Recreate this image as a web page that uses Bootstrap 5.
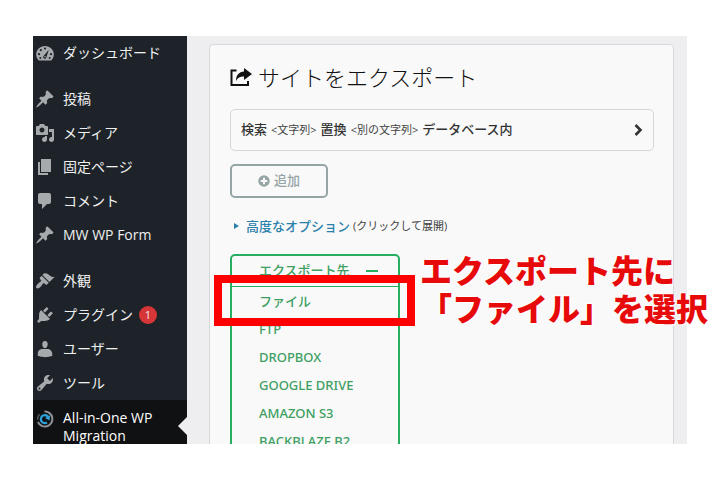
<!DOCTYPE html>
<html lang="ja">
<head>
<meta charset="utf-8">
<meta name="viewport" content="width=device-width, initial-scale=1">
<title>サイトをエクスポート</title>
<link href="https://cdn.jsdelivr.net/npm/bootstrap@5.3.0/dist/css/bootstrap.min.css" rel="stylesheet">
<style>
  body { font-family: "Open Sans", "Noto Sans CJK JP", sans-serif; background: #fff; font-size: 13px; }
  .stage { padding: 36px 33px; height: 100vh; }
  .admin { background: #eeeef0; }
  .side { width: 154px; background: #1d2328; font-size: 14px; }
  .side .nav-link { color: #f0f0f1; min-height: 34px; padding: 0 4px 0 2px; gap: 8px; line-height: 18px; }
  .side .nav-link svg { width: 20px; height: 20px; fill: #a7aaad; flex: none; }
  .side .group { margin-bottom: 12px; }
  .side .nav-link.current { background: #101112; color: #fff; padding-top: 9px; padding-bottom: 9px; }
  .current::after { content: ""; position: absolute; right: 0; top: 17px; border: 9px solid transparent; border-right-color: #eeeef0; border-left: 0; }
  .count { background: #d63638; width: 18px; height: 18px; font-size: 11px; line-height: 18px; margin-left: -2px; }
  .main { padding: 8px 13px 0 22px; }
  .panel { background: #f9f9f9; border: 1px solid #d8d8da; border-radius: 4px 4px 0 0; padding: 16px 19px 0 20px; min-height: 100%; }
  .panel h1 { font-size: 22px; line-height: 32px; font-weight: 300; color: #111; gap: 6px; margin-bottom: 16px; }
  .replace { background: #f9f9f9; border: 1px solid #d6d6d6; border-radius: 5px; height: 42px; padding: 0 10px; color: #333; }
  .replace b { font-weight: 500; }
  .replace small { font-size: 11px; color: #444; }
  .btn-add { width: 98px; height: 34px; border: 2px solid #95a5a6; border-radius: 5px; color: #95a5a6; font-size: 13px; font-weight: 500; margin-top: 13px; padding: 0; gap: 4px; }
  .advanced { margin-top: 16px; line-height: 24px; color: #2980a9; font-weight: 500; gap: 3px; padding-left: 4px; }
  .advanced svg { margin-right: 4px; }
  .advanced small { font-size: 11px; font-weight: 400; color: #444; }
  .export { font-family: "Noto Sans", "Noto Sans CJK JP", sans-serif; width: 170px; margin-top: 16px; border: 2px solid #27ae60; border-radius: 5px; color: #3d9f62; font-weight: 500; }
  .export button { color: inherit; font-weight: 500; background: none; border: 0; border-bottom: 1px solid #27ae60; height: 31px; padding: 0 20px 0 27px; }
  .export a { color: inherit; line-height: 28px; padding-left: 27px; }
  .ring { position: absolute; left: 214px; top: 275px; width: 201px; height: 51px; border: 8px solid #f00; pointer-events: none; }
  .callout-text { position: absolute; left: 420px; top: 250px; font-size: 32px; line-height: 38px; font-weight: 900; color: #e60a0a; text-shadow: 0 0 1px #fff, 1px 1px 1px #fff, -1px -1px 1px #fff; font-family: "Noto Sans CJK JP", sans-serif; }
</style>
<script src="https://cdn.jsdelivr.net/npm/bootstrap@5.3.0/dist/js/bootstrap.bundle.min.js"></script>
</head>
<body>
<div class="stage position-relative overflow-hidden">
  <div class="admin d-flex h-100 overflow-hidden">
    <nav class="side flex-shrink-0" aria-label="管理メニュー">
      <div class="group nav flex-column">
        <a class="nav-link d-flex align-items-center" href="#"><svg viewBox="0 0 20 20"><path d="M3.800 17.500h12.400c1.600-1.600 2.600-3.800 2.600-6C18.800 6.600 14.900 3 10 3s-8.800 3.600-8.800 8.500c0 2.200 1 4.400 2.600 6z"/><g fill="#1d2328"><circle cx="10" cy="5.500" r="1.100"/><circle cx="5.800" cy="7.200" r="1.100"/><circle cx="4" cy="11.200" r="1.100"/><circle cx="16" cy="11.200" r="1.100"/><circle cx="5.300" cy="15" r="1"/><circle cx="14.700" cy="15" r="1"/><path d="M13.800 6.800 11.500 14a1.700 1.700 0 1 1-2.700-1.300z"/></g><circle cx="10" cy="13.800" r=".8"/></svg>ダッシュボード</a>
      </div>
      <div class="group nav flex-column">
        <a class="nav-link d-flex align-items-center" href="#"><svg viewBox="0 0 20 20"><path d="M10.440 3.020l1.820-1.820 6.360 6.350-1.830 1.820c-1.050-.68-2.480-.57-3.410.36l-.75.75c-.92.93-1.040 2.350-.35 3.410l-1.830 1.820-2.410-2.410-2.800 2.790c-.42.42-3.380 2.710-3.800 2.290s1.860-3.390 2.280-3.810l2.790-2.790L4.100 9.360l1.830-1.820c1.050.69 2.480.57 3.400-.36l.75-.75c.93-.92 1.050-2.350.36-3.410z"/></svg>投稿</a>
        <a class="nav-link d-flex align-items-center" href="#"><svg viewBox="0 0 20 20"><path fill-rule="evenodd" d="M13 11V4c0-.55-.45-1-1-1h-1.670L9 1H5L3.670 3H2c-.55 0-1 .45-1 1v7c0 .55.45 1 1 1h10c.55 0 1-.45 1-1zM7 4.500c1.380 0 2.500 1.120 2.500 2.500S8.380 9.500 7 9.500 4.500 8.380 4.500 7 5.620 4.500 7 4.500zM14 6h5v10.500c0 1.380-1.120 2.500-2.500 2.500S14 17.880 14 16.500s1.120-2.500 2.500-2.500c.17 0 .34.02.5.05V9h-3V6zm-4 8.050V13h2v3.500c0 1.380-1.120 2.500-2.500 2.500S7 17.880 7 16.500 8.120 14 9.500 14c.17 0 .34.02.5.05z"/></svg>メディア</a>
        <a class="nav-link d-flex align-items-center" href="#"><svg viewBox="0 0 20 20"><path d="M6 15V2h10v13H6zm-1 1h8v2H3V5h2v11z"/></svg>固定ページ</a>
        <a class="nav-link d-flex align-items-center" href="#"><svg viewBox="0 0 20 20"><path d="M5 2h9c1.100 0 2 .9 2 2v7c0 1.100-.9 2-2 2h-2l-5 5v-5H5c-1.100 0-2-.9-2-2V4c0-1.100.9-2 2-2z"/></svg>コメント</a>
        <a class="nav-link d-flex align-items-center" href="#"><svg viewBox="0 0 20 20"><path d="M10.440 3.020l1.820-1.820 6.360 6.350-1.830 1.820c-1.050-.68-2.480-.57-3.410.36l-.75.75c-.92.93-1.040 2.350-.35 3.410l-1.830 1.820-2.410-2.410-2.800 2.790c-.42.42-3.380 2.710-3.800 2.290s1.860-3.390 2.280-3.810l2.790-2.790L4.100 9.360l1.830-1.820c1.050.69 2.480.57 3.400-.36l.75-.75c.93-.92 1.050-2.350.36-3.410z"/></svg>MW WP Form</a>
      </div>
      <div class="nav flex-column">
        <a class="nav-link d-flex align-items-center" href="#"><svg viewBox="0 0 20 20"><path d="M14.480 11.060L7.410 3.990l1.500-1.500c.5-.56 2.300-.47 3.510.32 1.210.8 1.430 1.280 2.910 2.100 1.180.64 2.450 1.260 4.450.85zm-.71.71L6.700 4.700 4.930 6.470c-.39.39-.39 1.020 0 1.410l1.060 1.060c.39.39.39 1.030 0 1.420-.6.6-1.430 1.110-2.210 1.690-.35.26-.7.53-1.010.84C1.430 14.230.4 16.080 1.400 17.070c.99 1 2.840-.03 4.180-1.360.31-.31.58-.66.85-1.020.57-.78 1.080-1.610 1.690-2.210.39-.39 1.020-.39 1.410 0l1.060 1.060c.39.39 1.020.39 1.410 0z"/></svg>外観</a>
        <a class="nav-link d-flex align-items-center" href="#"><svg viewBox="0 0 20 20"><path d="M13.110 4.360L9.870 7.600 8 5.730l3.240-3.240c.35-.34 1.050-.2 1.560.32.52.51.66 1.210.31 1.550zm-8 1.770l.91-1.120 9.010 9.010-1.190.84c-.71.71-2.630 1.160-3.820 1.160H6.140L4.900 17.260c-.59.59-1.540.59-2.120 0-.59-.58-.59-1.530 0-2.120l1.240-1.240v-3.880c0-1.130.4-3.190 1.090-3.890zm7.260 3.970l3.240-3.240c.34-.35 1.040-.21 1.550.31.52.51.66 1.210.31 1.550l-3.240 3.250z"/></svg>プラグイン<span class="count rounded-circle text-center">1</span></a>
        <a class="nav-link d-flex align-items-center" href="#"><svg viewBox="0 0 20 20"><path d="M10 9.250c-2.270 0-2.730-3.440-2.730-3.440C7 4.020 7.820 2 9.970 2c2.160 0 2.980 2.020 2.710 3.810 0 0-.41 3.440-2.680 3.440zM7.230 10h5.490c2.390 0 4.520 2.330 4.520 4.530v2.490s-3.650 1.130-7.240 1.130c-3.650 0-7.240-1.130-7.240-1.130v-2.490c0-2.250 1.940-4.530 4.470-4.530z"/></svg>ユーザー</a>
        <a class="nav-link d-flex align-items-center" href="#"><svg viewBox="0 0 20 20"><path fill-rule="evenodd" d="M16.680 9.770c-1.340 1.340-3.300 1.670-4.950.99l-5.410 6.520c-.99.99-2.590.99-3.580 0s-.99-2.590 0-3.570l6.520-5.420c-.68-1.650-.35-3.610.99-4.950 1.280-1.280 3.120-1.620 4.720-1.060l-2.890 2.890 2.820 2.820 2.860-2.870c.53 1.580.18 3.390-1.080 4.650zM3.810 16.210c.4.39 1.040.39 1.430 0 .4-.4.4-1.040 0-1.430-.39-.4-1.030-.4-1.430 0-.39.39-.39 1.030 0 1.430z"/></svg>ツール</a>
        <a class="nav-link current d-flex align-items-start position-relative" href="#" aria-current="page"><svg viewBox="0 0 20 20"><g fill="none"><path d="M9.500 2.500A7.500 7.500 0 1 1 3 13" stroke="#8d9196" stroke-width="2"/><path d="M2.500 10.500A7.500 7.500 0 0 1 4.500 5.200" stroke="#5c6064" stroke-width="1.500"/><path d="M12 13.500A4 4 0 1 1 13.500 8.500" stroke="#2ea2dc" stroke-width="2.200"/></g><path d="M10 9l5-2.500-.5 5z" fill="#2ea2dc"/></svg><span>All-in-One WP Migration</span></a>
      </div>
    </nav>

    <main class="main flex-grow-1">
      <section class="panel">
        <h1 class="d-flex align-items-center"><svg width="22" height="20" viewBox="0 0 22 20"><path d="M6.500 3.500H1.500V18H18v-4" fill="none" stroke="#111" stroke-width="2"/><path d="M14 1l8 6-8 6V9.500c-4 0-6 1-8 4.500 0-6 3-9 8-9.500z" fill="#111"/></svg>サイトをエクスポート</h1>
        <button type="button" class="replace w-100 d-flex align-items-center justify-content-between">
          <span class="d-flex align-items-center gap-1"><b>検索</b><small>&lt;文字列&gt;</small><b>置換</b><small>&lt;別の文字列&gt;</small><b>データベース内</b></span>
          <svg width="9" height="12" viewBox="0 0 9 12"><path d="M1.500 1l5 5-5 5" fill="none" stroke="#333" stroke-width="2.600"/></svg>
        </button>
        <button type="button" class="btn btn-add d-flex align-items-center justify-content-center"><svg width="12" height="12" viewBox="0 0 12 12"><circle cx="6" cy="6" r="5.700" fill="#95a5a6"/><path d="M6 2.800v6.400M2.800 6h6.400" stroke="#f9f9f9" stroke-width="2"/></svg>追加</button>
        <a href="#" class="advanced d-flex align-items-center text-decoration-none"><svg width="5" height="6" viewBox="0 0 5 6"><path d="M0 0l5 3-5 3z" fill="#2980a9"/></svg><span>高度なオプション</span><small>(クリックして展開)</small></a>
        <div class="export">
          <button type="button" class="w-100 d-flex align-items-center justify-content-between" aria-expanded="true">エクスポート先<svg width="12" height="2" viewBox="0 0 12 2"><path d="M0 0h12v2H0z" fill="#27ae60"/></svg></button>
          <ul class="list-unstyled mb-0">
            <li><a class="d-block text-decoration-none" href="#">ファイル</a></li>
            <li><a class="d-block text-decoration-none" href="#">FTP</a></li>
            <li><a class="d-block text-decoration-none" href="#">DROPBOX</a></li>
            <li><a class="d-block text-decoration-none" href="#">GOOGLE DRIVE</a></li>
            <li><a class="d-block text-decoration-none" href="#">AMAZON S3</a></li>
            <li><a class="d-block text-decoration-none" href="#">BACKBLAZE B2</a></li>
          </ul>
        </div>
      </section>
    </main>
  </div>
  <div class="ring"></div>
  <div class="callout-text text-nowrap">エクスポート先に<br>「ファイル」を選択</div>
</div>
</body>
</html>
